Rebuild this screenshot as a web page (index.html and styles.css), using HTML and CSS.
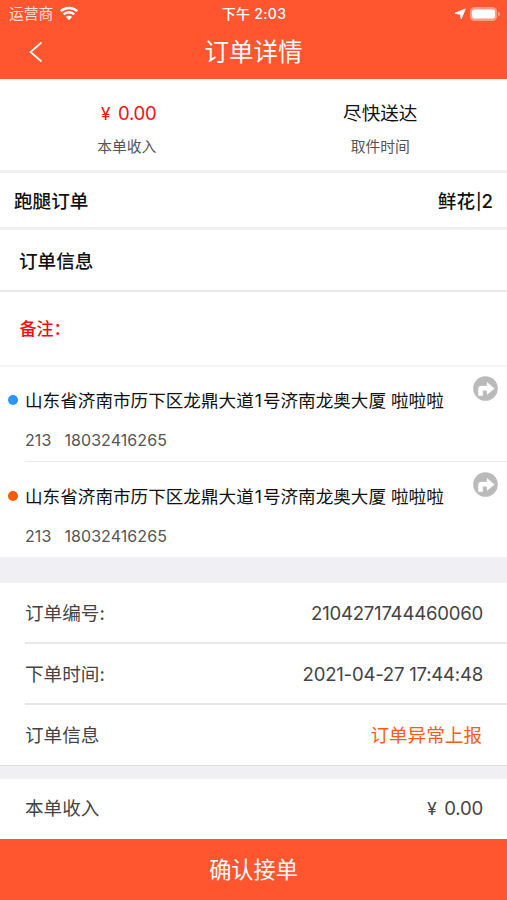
FILE: index.html
```html
<!DOCTYPE html>
<html lang="zh-CN">
<head>
<meta charset="UTF-8">
<title>订单详情</title>
<link rel="stylesheet" href="styles.css">
</head>
<body>
<header class="header">
  <div class="status">
    <div class="status-left">
      <span class="carrier">运营商</span>
      <svg class="wifi" width="20" height="15" viewBox="0 0 20 15">
        <path d="M1.8 5.2a11.8 11.8 0 0 1 16.4 0M4.7 8.3a7.6 7.6 0 0 1 10.6 0" fill="none" stroke="currentColor" stroke-width="2.5"/>
        <path d="M10 14.2 6.9 11a4.4 4.4 0 0 1 6.2 0z" fill="currentColor"/>
      </svg>
    </div>
    <span class="time">下午 2:03</span>
    <div class="status-right">
      <svg width="12" height="12" viewBox="0 0 12 12"><path d="M11.3.9 7.2 11 6.1 6.2 1 5.2z" fill="currentColor" stroke="currentColor" stroke-width=".8" stroke-linejoin="round"/></svg>
      <svg width="30" height="14" viewBox="0 0 30 14">
        <rect x="0" y="0" width="27" height="14" rx="4.5" fill="#ff9c86"/>
        <path d="M28 4.5q2 1 2 2.5t-2 2.5z" fill="#ff9c86"/>
        <rect x="2" y="2.5" width="23" height="9" rx="2.5" fill="currentColor"/>
      </svg>
    </div>
  </div>
  <div class="navbar">
    <svg class="back" width="14" height="22" viewBox="0 0 14 22"><path d="M12.5 1.5 1.5 11l11 9.5" fill="none" stroke="currentColor" stroke-width="1.7"/></svg>
    <h1 class="title">订单详情</h1>
  </div>
</header>

<main>
  <section class="summary">
    <div class="stat"><span class="stat-value red"><span class="yen">¥</span><span class="number">0.00</span></span><span class="stat-label">本单收入</span></div>
    <div class="stat"><span class="stat-value">尽快送达</span><span class="stat-label">取件时间</span></div>
  </section>
  <section class="kind"><span>跑腿订单</span><span class="goods">鲜花<span class="bar">|</span>2</span></section>
  <section class="heading">订单信息</section>
  <section class="remark">备注：</section>

  <section class="stops">
    <article class="stop">
      <i class="dot blue"></i>
      <div class="stop-body">
        <p class="address">山东省济南市历下区龙鼎大道<span class="num">1</span>号济南龙奥大厦 啦啦啦</p>
        <p class="contact"><span>213</span><span>18032416265</span></p>
        <svg class="turn" width="25" height="25" viewBox="0 0 25 25"><circle cx="12.5" cy="12.5" r="12.3" fill="#bababa"/><path d="M5.4 19.6v-6.4q0-3.1 3.1-3.1h5.6V6.4l7.2 6-7.2 6v-4.1H9.7v5.3z" fill="#fff" stroke="#fff" stroke-width=".5" stroke-linejoin="round"/></svg>
      </div>
    </article>
    <article class="stop">
      <i class="dot orange"></i>
      <div class="stop-body">
        <p class="address">山东省济南市历下区龙鼎大道<span class="num">1</span>号济南龙奥大厦 啦啦啦</p>
        <p class="contact"><span>213</span><span>18032416265</span></p>
        <svg class="turn" width="25" height="25" viewBox="0 0 25 25"><circle cx="12.5" cy="12.5" r="12.3" fill="#bababa"/><path d="M5.4 19.6v-6.4q0-3.1 3.1-3.1h5.6V6.4l7.2 6-7.2 6v-4.1H9.7v5.3z" fill="#fff" stroke="#fff" stroke-width=".5" stroke-linejoin="round"/></svg>
      </div>
    </article>
  </section>

  <section class="details">
    <div class="row"><span>订单编号:</span><span class="number">2104271744460060</span></div>
    <div class="row"><span>下单时间:</span><span class="number">2021-04-27 17:44:48</span></div>
    <div class="row"><span>订单信息</span><a class="report">订单异常上报</a></div>
  </section>
  <section class="income"><span>本单收入</span><span><span class="yen">¥</span><span class="number">0.00</span></span></section>
</main>
<button class="confirm">确认接单</button>
</body>
</html>
```

FILE: styles.css
```css
* { box-sizing: border-box; }
body {
  margin: 0;
  width: 507px;
  height: 900px;
  overflow: hidden;
  display: flex;
  flex-direction: column;
  background: #fff;
  color: #111;
  font-family: Inter, "Noto Sans CJK SC", sans-serif;
  font-size: 18.6px;
  line-height: 1;
}
p, h1 { margin: 0; }
.header { height: 79px; background: #ff5630; color: #fff; }
.status {
  height: 27px;
  display: grid;
  grid-template-columns: 1fr auto 1fr;
  align-items: center;
  padding: 0 7px 0 9px;
  font-size: 14.8px;
}
.status-left, .status-right { display: flex; align-items: center; gap: 6px; }
.status-right { justify-content: flex-end; gap: 4px; }
.carrier { color: #ffe0d8; padding-top: 2px; }
.time { font-weight: 500; font-size: 14px; letter-spacing: .3px; margin-left: -1px; }
.navbar {
  height: 50px;
  display: grid;
  grid-template-columns: 1fr auto 1fr;
  align-items: center;
  padding: 0 29px;
}
.title { font-size: 24.5px; font-weight: 400; }

.summary { height: 94px; display: flex; border-bottom: 3px solid #f0f0f1; }
.stat { flex: 1; display: flex; flex-direction: column; align-items: center; padding-top: 23px; }
.stat-value { height: 22px; line-height: 22px; }
.stat-label { height: 18px; line-height: 18px; margin-top: 14px; font-size: 14.8px; color: #555; }
.red { color: #f5110f; padding-left: 4px; }
.yen { display: inline-block; width: 17px; font-size: 17px; }
.kind {
  height: 57px;
  display: flex;
  justify-content: space-between;
  align-items: center;
  padding: 2px 14px 0;
  border-bottom: 3px solid #f0f0f1;
  font-weight: 500;
}
.bar { font-size: 16px; margin: 0 0 0 1px; position: relative; top: -1px; }
.heading { height: 62px; display: flex; align-items: center; padding: 3px 19px 0; border-bottom: 2px solid #e8e8e9; font-weight: 500; }
.remark { height: 75px; display: flex; align-items: center; padding: 2px 19.5px 0; border-bottom: 2px solid #f3f3f4; color: #fa0b0b; font-size: 17px; font-weight: 500; }

.stops { height: 190px; }
.stop { height: 95px; display: flex; padding-left: 8px; }
.dot { width: 10px; height: 10px; margin: 28px 7px 0 0; border-radius: 50%; }
.blue { background: #2c97fa; }
.orange { background: #ff5a05; }
.stop-body { position: relative; flex: 1; padding-top: 23px; border-bottom: 1px solid #ebebec; }
.stop + .stop .stop-body { border: 0; padding-top: 24px; }
.stop + .stop .dot { margin-top: 29px; }
.address { font-size: 17.6px; line-height: 22px; white-space: nowrap; }
.num { margin: 0 1px; }
.contact { display: flex; gap: 13px; margin-top: 18px; font-size: 16px; letter-spacing: .08px; line-height: 21px; color: #555; }
.turn { position: absolute; top: 9px; right: 9px; }
.stop + .stop .turn { top: 10px; }

.details { border-top: 26px solid #efeff4; color: #444; }
.row { height: 61px; display: flex; justify-content: space-between; align-items: center; margin-left: 25px; padding: 2px 24px 0 0; border-bottom: 2px solid #e8e8e9; }
.row:last-child { margin-left: 0; padding: 0 24px 0 25px; border-bottom: 1px solid #dcdcdf; }
.number { letter-spacing: -.24px; }
.report { color: #ff5a19; margin-right: 1px; }
.income { height: 73px; display: flex; justify-content: space-between; align-items: center; padding: 0 24px 1px 25px; border-top: 13px solid #efeff4; color: #444; }
.confirm {
  flex: 1;
  border: 0;
  padding: 2px 0 0;
  background: #ff5630;
  color: #fff;
  font: inherit;
  font-size: 22.2px;
}
```
